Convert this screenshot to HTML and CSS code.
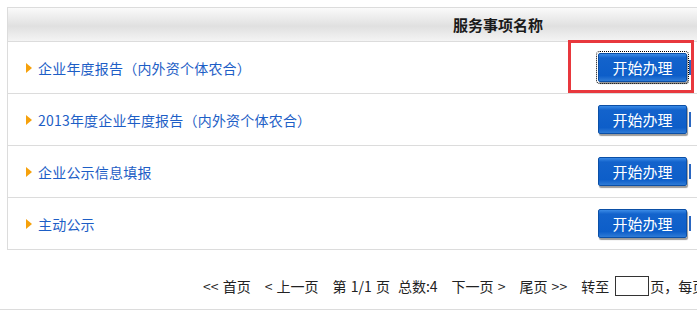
FILE: index.html
```html
<!DOCTYPE html>
<html lang="zh-CN">

<head>
    <meta charset="UTF-8">
    <meta name="viewport" content="width=device-width, initial-scale=1.0">
    <title>服务事项</title>
    <link rel="stylesheet" href="styles.css">
</head>

<body>
    <div class="list">
        <div class="head">服务事项名称</div>
        <div class="row">
            <div class="name"><i class="arrow"></i><a href="#">企业年度报告（内外资个体农合）</a></div>
            <div class="op"><button class="btn focus">开始办理</button><i class="bar"></i></div>
        </div>
        <div class="row">
            <div class="name"><i class="arrow"></i><a href="#">2013年度企业年度报告（内外资个体农合）</a></div>
            <div class="op"><button class="btn">开始办理</button><i class="bar"></i></div>
        </div>
        <div class="row">
            <div class="name"><i class="arrow"></i><a href="#">企业公示信息填报</a></div>
            <div class="op"><button class="btn">开始办理</button><i class="bar"></i></div>
        </div>
        <div class="row last">
            <div class="name"><i class="arrow"></i><a href="#">主动公示</a></div>
            <div class="op"><button class="btn">开始办理</button><i class="bar"></i></div>
        </div>
    </div>

    <div class="pager">
        <span class="p1">&lt;&lt; 首页</span>
        <span class="p2">&lt; 上一页</span>
        <span class="p3">第 1/1 页</span>
        <span class="p4">总数:4</span>
        <span class="p5">下一页 &gt;</span>
        <span class="p6">尾页 &gt;&gt;</span>
        <span class="p7">转至</span>
        <span class="goto"></span>
        <span>页，每页</span>
    </div>

    <!-- red annotation box drawn over the first button -->
    <div class="mark"></div>
</body>

</html>
```

FILE: styles.css
```css
html, body {
    margin: 0;
    overflow: hidden;
    background: #fff;
}

body {
    font-family: "Noto Sans CJK SC", "Noto Sans", sans-serif;
    font-size: 14px;
    color: #222;
}

.list {
    margin: 7px 0 0 7px;
    width: 980px;
    border: 1px solid #dcdcdc;
}

.head {
    height: 33px;
    line-height: 33px;
    text-align: center;
    font-size: 15px;
    font-weight: bold;
    color: #1a1a1a;
    border-bottom: 1px solid #dcdcdc;
    background: linear-gradient(#fafafa, #e0e0e0 55%, #f4f4f4);
}

.row {
    height: 51px;
    display: flex;
    align-items: center;
    border-bottom: 1px solid #dcdcdc;
}

.row.last {
    border-bottom: none;
}

.name {
    width: 590px;
    padding-left: 18px;
    box-sizing: border-box;
    display: flex;
    align-items: center;
}

.name a {
    color: #1d5ec6;
    text-decoration: none;
    margin-left: 6px;
    letter-spacing: 0.2px;
}

.arrow {
    width: 0;
    height: 0;
    border-left: 6px solid #f6a10c;
    border-top: 5px solid transparent;
    border-bottom: 5px solid transparent;
}

.op {
    display: flex;
    align-items: center;
}

.btn {
    width: 89px;
    height: 29px;
    padding: 0;
    font-family: inherit;
    font-size: 15px;
    color: #fff;
    border: 1px solid #0b4fa6;
    border-radius: 2px;
    background: linear-gradient(#3a8ae6, #1363cc 15%, #0d5ec9 80%, #2f7bd6);
    box-shadow: 1px 2px 1px #9a9a9a;
}

.btn.focus {
    outline: 1px dotted #000;
    outline-offset: 1px;
}

.bar {
    width: 2px;
    height: 15px;
    margin-left: 2px;
    background: #2a66c0;
}

.pager {
    height: 60px;
    box-sizing: border-box;
    padding: 12px 0 0 203px;
    display: flex;
    align-items: center;
    white-space: nowrap;
    word-spacing: 1px;
    border-bottom: 1px solid #dcdcdc;
}

.pager span {
    flex-shrink: 0;
    margin-right: 14px;
}

.pager .p3 {
    margin-right: 8px;
}

.pager .p7 {
    margin-right: 6px;
}

.pager .goto {
    width: 32px;
    height: 18px;
    border: 1px solid #333;
    margin-right: 1px;
}

.mark {
    position: absolute;
    left: 568px;
    top: 40px;
    width: 126px;
    height: 53px;
    box-sizing: border-box;
    border: 3px solid #e8383d;
}
```
